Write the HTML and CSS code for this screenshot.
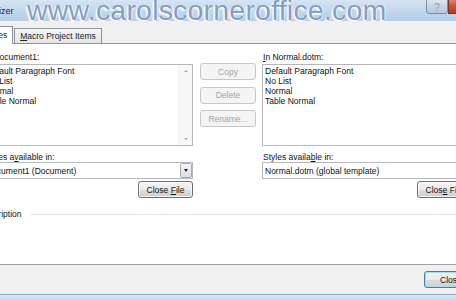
FILE: index.html
```html
<!DOCTYPE html>
<html lang="en">

<head>
    <meta charset="UTF-8" />
    <title>Organizer</title>
    <link rel="stylesheet" href="styles.css">
</head>

<body>
    <div class="window">
        <div class="titlebar">
            <span class="title">Organizer</span>
            <svg class="caption-btns" width="30" height="14" viewBox="0 0 30 14">
                <defs>
                    <linearGradient id="helpGrad" x1="0" y1="0" x2="0" y2="1">
                        <stop offset="0" stop-color="#e9eff6" />
                        <stop offset="0.5" stop-color="#cad6e4" />
                        <stop offset="1" stop-color="#b6c5d8" />
                    </linearGradient>
                    <linearGradient id="closeGrad" x1="0" y1="0" x2="0" y2="1">
                        <stop offset="0" stop-color="#e8a487" />
                        <stop offset="0.5" stop-color="#cc5434" />
                        <stop offset="1" stop-color="#b23c1a" />
                    </linearGradient>
                </defs>
                <rect x="0.5" y="-3" width="21" height="16.5" rx="2.5" fill="url(#helpGrad)" stroke="#7b8ea6" />
                <text x="11" y="11" font-size="10" font-family="Liberation Sans, sans-serif" text-anchor="middle" fill="#8a99ab">?</text>
                <rect x="22.5" y="-3" width="12" height="16.5" fill="url(#closeGrad)" stroke="#7a2f20" />
            </svg>
            <div class="watermark">www.carolscorneroffice.com</div>
        </div>

        <div class="tabs">
            <div class="tab active">Styles</div>
            <div class="tab"><u>M</u>acro Project Items</div>
        </div>

        <div class="panel">
            <div class="columns">
                <div class="col">
                    <div class="label">In Document1:</div>
                    <div class="listbox">
                        <ul class="items">
                            <li>Default Paragraph Font</li>
                            <li>No List</li>
                            <li>Normal</li>
                            <li>Table Normal</li>
                        </ul>
                        <div class="scrollbar">
                            <span class="arrow up"></span>
                            <span class="arrow down"></span>
                        </div>
                    </div>
                    <div class="label second">Styles a<u>v</u>ailable in:</div>
                    <div class="combo">
                        <span>Document1 (Document)</span>
                        <span class="drop"><span class="caret"></span></span>
                    </div>
                    <div class="btn-row">
                        <button class="btn">Close <u>F</u>ile</button>
                    </div>
                </div>

                <div class="mid">
                    <button class="btn disabled">Copy</button>
                    <button class="btn disabled">Delete</button>
                    <button class="btn disabled">Rename...</button>
                </div>

                <div class="col">
                    <div class="label"><u>I</u>n Normal.dotm:</div>
                    <div class="listbox">
                        <ul class="items">
                            <li>Default Paragraph Font</li>
                            <li>No List</li>
                            <li>Normal</li>
                            <li>Table Normal</li>
                        </ul>
                    </div>
                    <div class="label second">Styles availa<u>b</u>le in:</div>
                    <div class="combo">
                        <span>Normal.dotm (global template)</span>
                    </div>
                    <div class="btn-row">
                        <button class="btn">Clos<u>e</u> File</button>
                    </div>
                </div>
            </div>

            <div class="desc">
                <span>Description</span>
                <span class="desc-line"></span>
            </div>
        </div>

        <div class="footer">
            <button class="btn default">Close</button>
        </div>
        <div class="frame-bottom"></div>
    </div>
</body>

</html>
```

FILE: styles.css
```css
body {
    margin: 0;
    font-family: 'Liberation Sans', Arial, sans-serif;
    font-size: 8.5px;
    color: #111;
    overflow: hidden;
}

.window {
    width: 456px;
    height: 300px;
    overflow: hidden;
    background: #f0f0f0;
}

/* title bar */
.titlebar {
    position: relative;
    height: 21px;
    display: flex;
    background: linear-gradient(to bottom, #d6e4f3, #c0d4eb 60%, #b6cce6);
    overflow: hidden;
}

.title {
    margin-left: -26px;
    margin-top: 6px;
    font-size: 9px;
    color: #1d2a3a;
}

.caption-btns {
    display: block;
    flex-shrink: 0;
    margin-left: auto;
    position: relative;
    z-index: 2;
}

.watermark {
    position: absolute;
    left: 27px;
    top: -4px;
    font-size: 28.5px;
    line-height: 28px;
    letter-spacing: 0.2px;
    color: #849fc2;
    text-shadow: -1px 1px 0 #fff, 1px 0 0 rgba(255, 255, 255, 0.7), -2px 2px 1px rgba(255, 255, 255, 0.6);
    white-space: nowrap;
    z-index: 1;
}

/* tabs */
.tabs {
    height: 22px;
    display: flex;
    align-items: flex-end;
    gap: 1px;
    margin-left: -22px;
}

.tab {
    height: 14px;
    padding: 0 5px;
    border: 1px solid #8e939b;
    border-bottom: none;
    background: linear-gradient(to bottom, #f6f6f6, #e4e4e4);
    line-height: 14px;
    color: #222;
}

.tab.active {
    height: 17px;
    line-height: 17px;
    background: #fff;
    margin-bottom: -1px;
    position: relative;
    z-index: 1;
}

/* page */
.panel {
    box-sizing: border-box;
    height: 222px;
    background: #fff;
    border-top: 1px solid #8e939b;
    border-bottom: 1px solid #a0a0a0;
    padding-top: 8px;
}

.columns {
    display: grid;
    grid-template-columns: 210px 57px 210px;
    column-gap: 6px;
    margin-left: -17px;
}

.label {
    height: 10px;
    line-height: 10px;
    padding-left: 1px;
    white-space: nowrap;
}

.label.second {
    margin-top: 6px;
}

.listbox {
    box-sizing: border-box;
    height: 82px;
    margin-top: 2px;
    border: 1px solid #b4b7bd;
    display: flex;
    background: #fff;
}

.items {
    flex: 1;
    list-style: none;
    margin: 0;
    padding: 1px 2px;
    line-height: 10px;
    white-space: nowrap;
}

.scrollbar {
    width: 13px;
    display: flex;
    flex-direction: column;
    justify-content: space-between;
    align-items: center;
    padding: 5px 0;
    background: #f7f7f7;
    border-left: 1px solid #f0f0f0;
}

.arrow {
    width: 0;
    height: 0;
    border-left: 2px solid transparent;
    border-right: 2px solid transparent;
}

.arrow.up {
    border-bottom: 2px solid #a8a8a8;
}

.arrow.down {
    border-top: 2px solid #a8a8a8;
}

.combo {
    box-sizing: border-box;
    height: 17px;
    border: 1px solid #b4b7bd;
    display: flex;
    align-items: center;
    padding-left: 2px;
    background: #fff;
    white-space: nowrap;
}

.drop {
    box-sizing: border-box;
    width: 12px;
    height: 15px;
    margin-left: auto;
    border: 1px solid #a9adb3;
    border-radius: 2px;
    background: linear-gradient(to bottom, #f5f5f5, #dedede);
    display: flex;
    align-items: center;
    justify-content: center;
}

.caret {
    width: 0;
    height: 0;
    border-left: 2.5px solid transparent;
    border-right: 2.5px solid transparent;
    border-top: 3px solid #222;
}

.btn-row {
    display: flex;
    justify-content: flex-end;
    margin-top: 2px;
}

.btn {
    box-sizing: border-box;
    height: 17px;
    width: 55px;
    padding: 0;
    font-family: inherit;
    font-size: 8.5px;
    color: #111;
    border: 1px solid #707070;
    border-radius: 3px;
    background: linear-gradient(to bottom, #f3f3f3, #ebebeb 50%, #dddddd 51%, #cfcfcf);
    box-shadow: inset 0 0 0 1px rgba(255, 255, 255, 0.7);
}

.mid {
    display: flex;
    flex-direction: column;
    align-items: flex-end;
    gap: 6.5px;
    padding-top: 11px;
}

.btn.disabled {
    width: 56px;
    color: #a3a3a3;
    border-color: #c4c6c8;
    background: #f4f4f4;
    box-shadow: none;
}

.desc {
    display: flex;
    align-items: center;
    height: 10px;
    margin-top: 11px;
    margin-left: -21px;
}

.desc-line {
    flex: 1;
    height: 1px;
    margin-left: 9px;
    background: #dde3e8;
}

.footer {
    height: 29px;
    display: flex;
    justify-content: flex-end;
    align-items: flex-start;
    padding-top: 6px;
    box-sizing: border-box;
}

.btn.default {
    width: 64px;
    margin-right: -32px;
    border-color: #3c7fb1;
    box-shadow: inset 0 0 0 1px #a9dbf6;
    text-align: left;
    padding-left: 15px;
}

.frame-bottom {
    height: 7px;
    border-top: 1px solid #8fa6c2;
    background: linear-gradient(to bottom, #dbe8f6, #bcd3ee);
}
```
